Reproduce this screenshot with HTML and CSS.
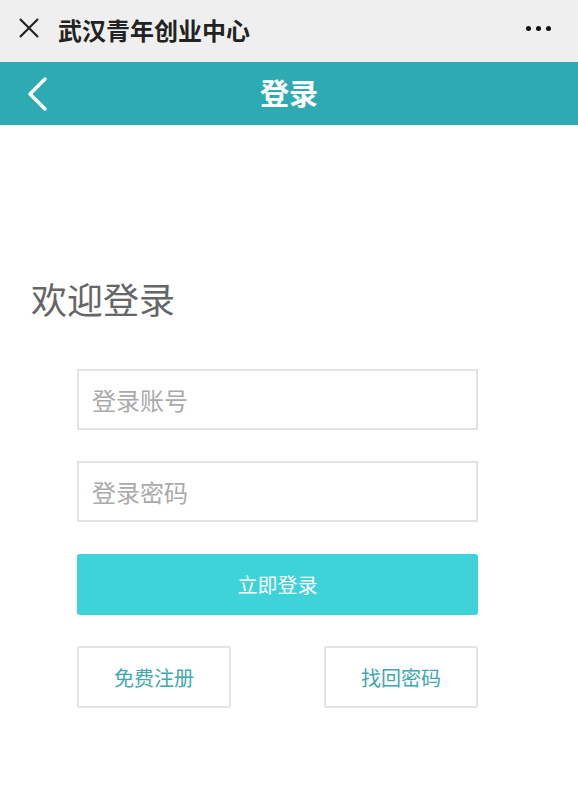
FILE: index.html
```html
<!DOCTYPE html>
<html lang="zh-CN">
<head>
  <meta charset="UTF-8" />
  <meta name="viewport" content="width=device-width, initial-scale=1.0"/>
  <title>登录</title>
  <link rel="stylesheet" href="styles.css">
</head>
<body>

  <!-- barra do app -->
  <div class="app-bar">
    <svg class="icon-close" width="22" height="20" viewBox="0 0 22 20">
      <path d="M2 1 L20 19 M20 1 L2 19" stroke="#222" stroke-width="2.2" fill="none"/>
    </svg>
    <div class="app-title">武汉青年创业中心</div>
    <div class="app-more">
      <span></span><span></span><span></span>
    </div>
  </div>

  <!-- cabecalho -->
  <div class="header">
    <svg class="icon-back" width="22" height="36" viewBox="0 0 22 36">
      <path d="M19 3 L4 18 L19 33" stroke="#fff" stroke-width="3.4" fill="none" stroke-linecap="round" stroke-linejoin="round"/>
    </svg>
    <div class="header-title">登录</div>
  </div>

  <!-- login -->
  <div class="login">
    <div class="welcome">欢迎登录</div>
    <div class="form">
      <input class="field" type="text" placeholder="登录账号">
      <input class="field" type="password" placeholder="登录密码">
      <button class="btn-login">立即登录</button>
      <div class="links">
        <button class="btn-link">免费注册</button>
        <button class="btn-link">找回密码</button>
      </div>
    </div>
  </div>

</body>
</html>
```

FILE: styles.css
```css
body {
  margin: 0;
  background-color: #fff;
  font-family: "Noto Sans CJK SC", "Noto Sans", sans-serif;
}

.app-bar {
  height: 62px;
  background-color: #efefef;
  display: flex;
  align-items: center;
  padding: 0 27px 0 18px;
}

.icon-close {
  margin-top: -6px;
}

.app-title {
  margin-left: 18px;
  margin-top: -4px;
  font-size: 24px;
  font-weight: bold;
  color: #222;
  flex: 1;
}

.app-more {
  display: flex;
  gap: 5px;
  margin-top: -6px;
}

.app-more span {
  width: 5px;
  height: 5px;
  border-radius: 50%;
  background-color: #111;
}

.header {
  height: 63px;
  background-color: #2eabb2;
  display: flex;
  align-items: center;
  position: relative;
  padding-left: 26px;
}

.header-title {
  position: absolute;
  left: 0;
  right: 0;
  top: 10px;
  text-align: center;
  font-size: 29px;
  line-height: 40px;
  font-weight: bold;
  color: #fff;
  pointer-events: none;
}

.login {
  padding-top: 150px;
}

.welcome {
  margin-left: 31px;
  font-size: 36px;
  line-height: 46px;
  color: #666;
}

.form {
  width: 401px;
  margin: 48px 0 0 77px;
  display: flex;
  flex-direction: column;
  gap: 31px;
}

.field {
  height: 61px;
  box-sizing: border-box;
  border: 2px solid #e2e2e2;
  padding: 0 13px;
  font-family: inherit;
  font-size: 24px;
  color: #333;
  outline: none;
}

.field::placeholder {
  color: #aaa;
}

.btn-login {
  height: 61px;
  margin-top: 1px;
  border: none;
  border-radius: 3px;
  background-color: #3dd3d8;
  color: #fff;
  font-family: inherit;
  font-size: 20px;
}

.links {
  display: flex;
  justify-content: space-between;
}

.btn-link {
  width: 154px;
  height: 62px;
  box-sizing: border-box;
  border: 2px solid #e4e4e4;
  border-radius: 2px;
  background-color: #fff;
  color: #3ea9ae;
  font-family: inherit;
  font-size: 20px;
}
```
